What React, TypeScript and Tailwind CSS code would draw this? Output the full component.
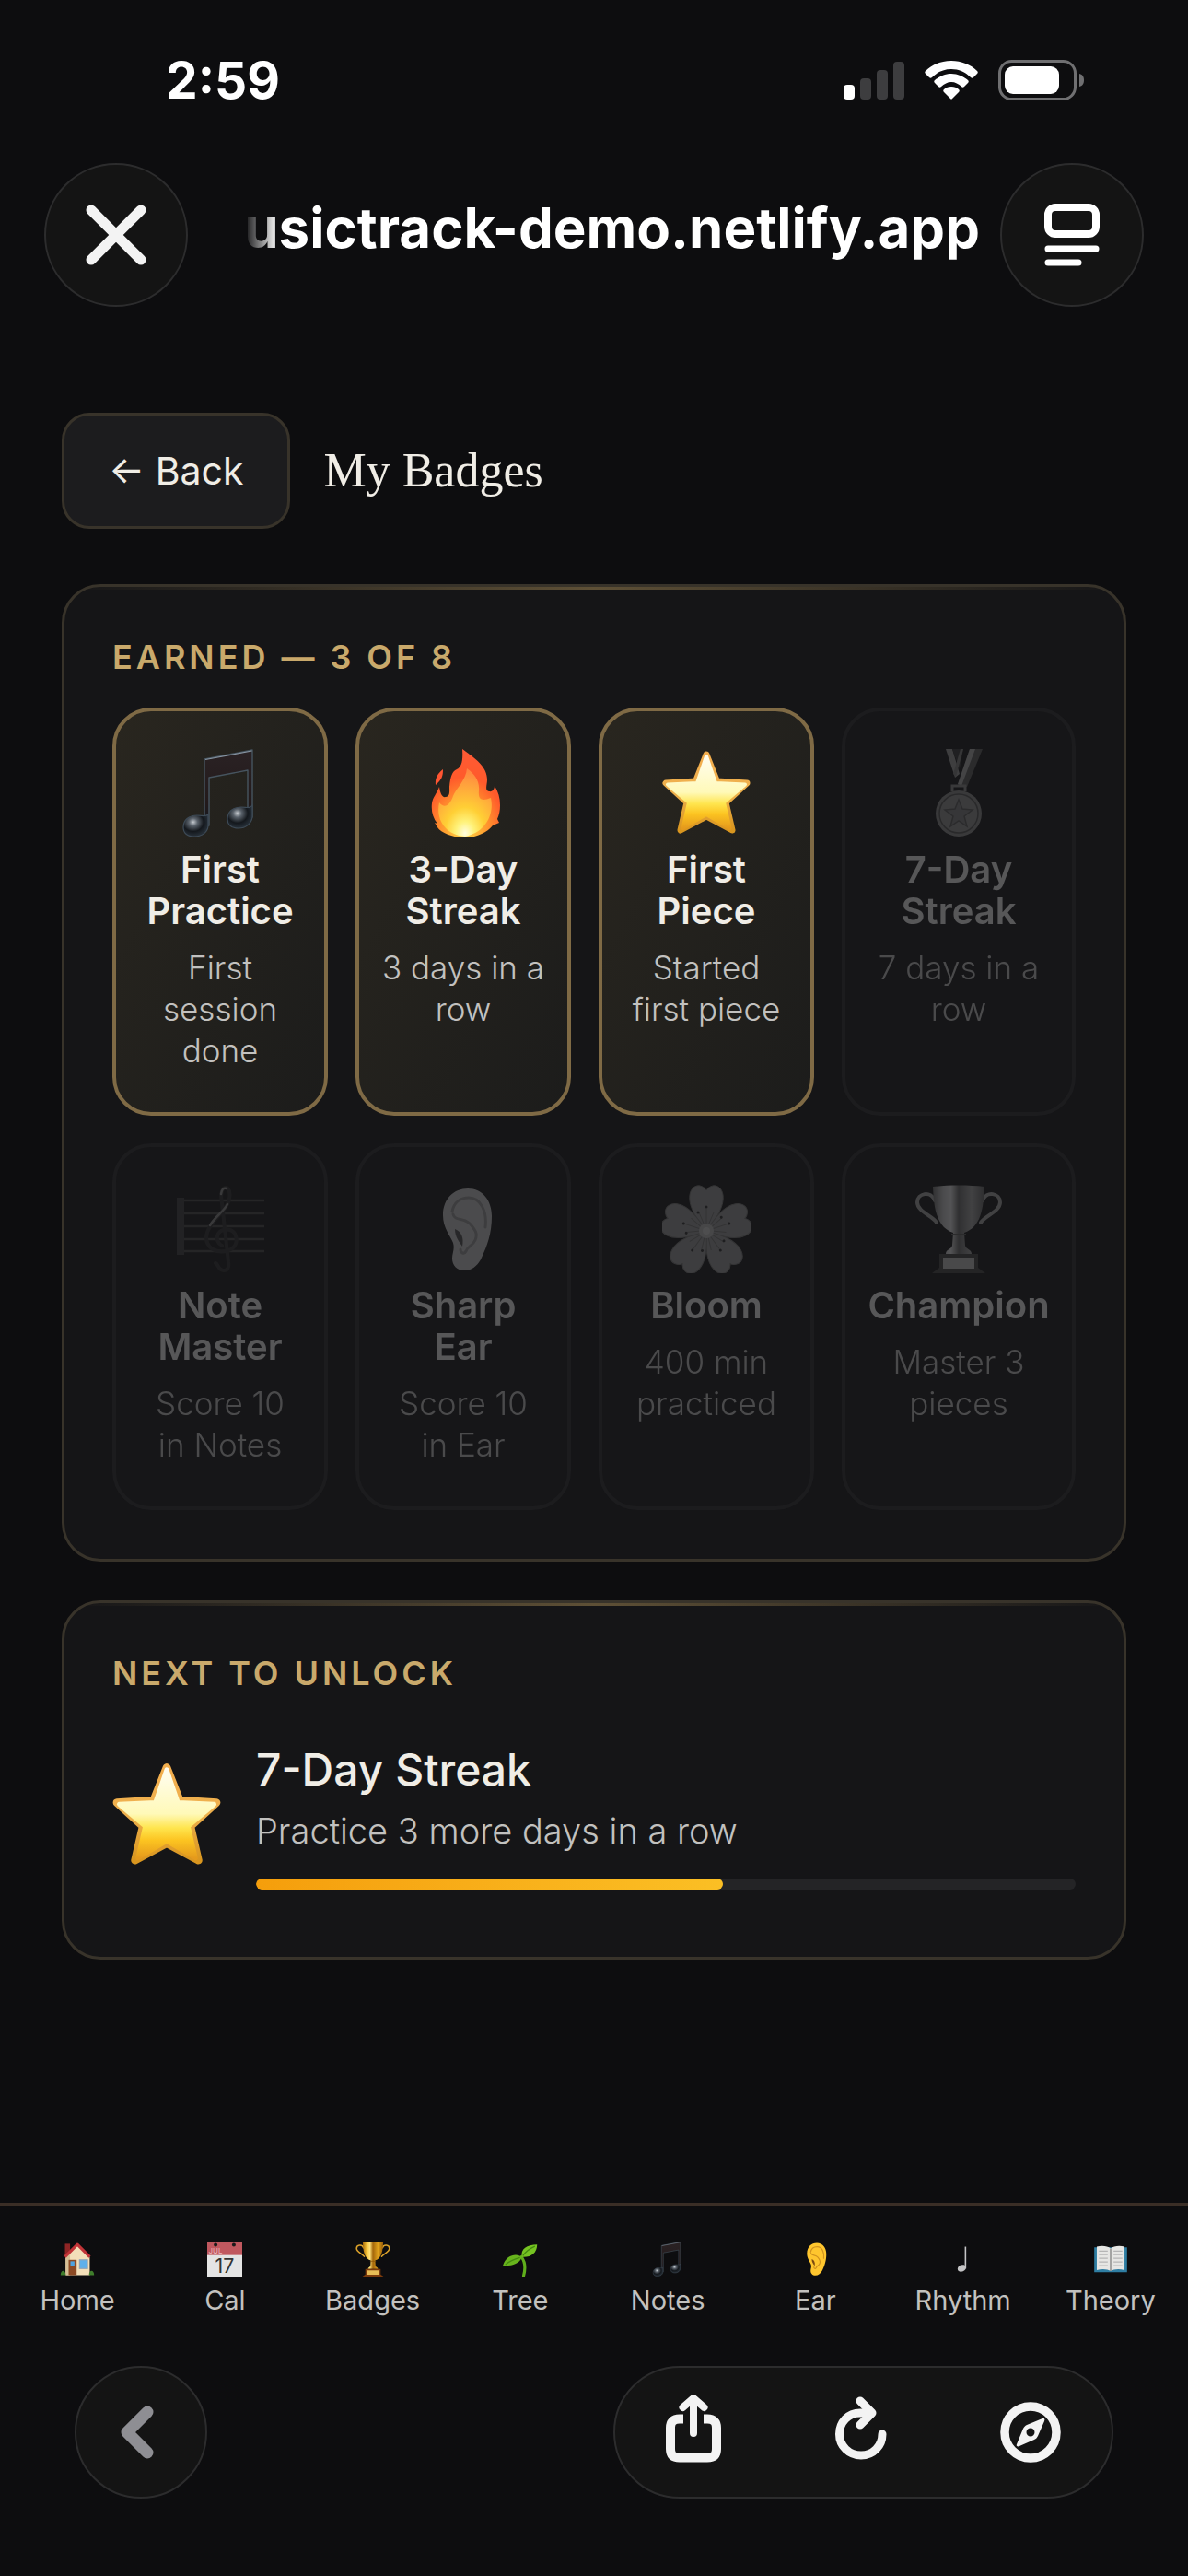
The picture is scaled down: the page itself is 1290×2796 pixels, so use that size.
import type { ReactNode } from "react";

interface IconProps {
  className?: string;
}

interface Badge {
  name: string;
  detail: string;
  icon: (props: IconProps) => ReactNode;
  earned: boolean;
}

/* ---------- Emoji style icons ---------- */

function NotesIcon({ className }: IconProps) {
  return (
    <svg viewBox="0 0 96 96" className={className} aria-hidden="true">
      <defs>
        <radialGradient id="noteHead" cx="0.4" cy="0.35" r="0.7">
          <stop offset="0" stopColor="#c4c9ce" />
          <stop offset="0.25" stopColor="#59616a" />
          <stop offset="0.6" stopColor="#14181d" />
          <stop offset="1" stopColor="#2c3640" />
        </radialGradient>
        <linearGradient id="noteBeam" x1="0" y1="0" x2="0" y2="1">
          <stop offset="0" stopColor="#2a2224" />
          <stop offset="0.7" stopColor="#231a1b" />
          <stop offset="1" stopColor="#141a22" />
        </linearGradient>
      </defs>
      <path
        d="M31 11 L83 1 V74 H78 V23 L36 31 V83 H31 Z"
        fill="url(#noteBeam)"
        stroke="#46545f"
        strokeWidth="1.4"
        strokeLinejoin="round"
      />
      <path d="M32 11.5 L82.5 2" stroke="#8794a1" strokeWidth="1.2" />
      <path
        d="M35 71 V84 C34 91 28 95 20 95 C12 95 8 91 8 85 C8 77 14 72 23 72 C29 72 32 74 35 71 Z"
        fill="url(#noteHead)"
        stroke="#3d4a56"
        strokeWidth="1.2"
      />
      <path
        d="M83 61 V74 C82 81 76 86 68 86 C60 86 56 82 56 76 C56 68 62 63 71 63 C77 63 80 65 83 61 Z"
        fill="url(#noteHead)"
        stroke="#3d4a56"
        strokeWidth="1.2"
      />
    </svg>
  );
}

function FlameIcon({ className }: IconProps) {
  return (
    <svg viewBox="0 0 96 96" className={className} aria-hidden="true">
      <defs>
        <radialGradient id="flameOuter" cx="0.48" cy="0.9" r="0.9">
          <stop offset="0" stopColor="#ffe04a" />
          <stop offset="0.35" stopColor="#ff9a2e" />
          <stop offset="0.65" stopColor="#ff5a2b" />
          <stop offset="1" stopColor="#ff5a36" />
        </radialGradient>
        <radialGradient id="flameInner" cx="0.5" cy="0.95" r="0.95">
          <stop offset="0" stopColor="#fffde0" />
          <stop offset="0.18" stopColor="#fff27a" />
          <stop offset="0.4" stopColor="#ffcf35" />
          <stop offset="0.75" stopColor="#ffa23d" />
          <stop offset="1" stopColor="#ff8140" />
        </radialGradient>
      </defs>
      <path
        d="M47 0 C56 7 74 17 74 33 C74 39 71 45 76 46 C80 47 82 43 82 40 C86 46 88 53 88 61 C88 67 87 71 85 76 L87 80 L80 83 C73 92 61 96 49 96 C36 96 24 91 20 85 L17 80 L20 81 C15 75 13 67 14 59 C15 52 19 49 22 41 C23 48 25 53 29 52 C34 51 33 46 33 41 C34 30 36 24 41 22 C46 20 48 13 47 0 Z"
        fill="url(#flameOuter)"
      />
      <path
        d="M52 21 C60 27 66 34 65 45 C64 55 68 57 78 53 C82 71 72 91 50 95 C28 93 18 76 22 58 C28 66 34 60 37 51 C40 43 51 34 52 21 Z"
        fill="url(#flameInner)"
      />
      <path d="M26 22 C26 29 25 33 18 39 C17 31 21 26 26 22 Z" fill="#ff5532" />
    </svg>
  );
}

function StarIcon({ className }: IconProps) {
  return (
    <svg viewBox="0 0 96 96" className={className} aria-hidden="true">
      <defs>
        <linearGradient id="starFill" x1="0" y1="0" x2="0" y2="1">
          <stop offset="0" stopColor="#fffdf0" />
          <stop offset="0.5" stopColor="#fff9b8" />
          <stop offset="0.66" stopColor="#ffe54e" />
          <stop offset="0.8" stopColor="#fcc421" />
          <stop offset="1" stopColor="#e59a1c" />
        </linearGradient>
        <linearGradient id="starEdge" x1="0" y1="0" x2="0" y2="1">
          <stop offset="0" stopColor="#f3ae4e" />
          <stop offset="0.5" stopColor="#eeb04d" />
          <stop offset="1" stopColor="#d9961f" />
        </linearGradient>
      </defs>
      <path
        d="M48 6 L59.5 35 L92 37 L69 58 L76 88 L48 73 L20 88 L27 58 L4 37 L36.5 35 Z"
        fill="url(#starEdge)"
        stroke="url(#starEdge)"
        strokeWidth="7"
        strokeLinejoin="round"
      />
      <path
        d="M48 8 L58 37 L90 38.5 L67 58 L73.5 86 L48 71 L22.5 86 L29 58 L6 38.5 L38 37 Z"
        fill="url(#starFill)"
        stroke="url(#starFill)"
        strokeWidth="4"
        strokeLinejoin="round"
      />
    </svg>
  );
}

function MedalIcon({ className }: IconProps) {
  return (
    <svg viewBox="0 0 96 96" className={className} aria-hidden="true">
      <path d="M34 0 H41 L49 27 L44 31 Z" fill="#9a9a9a" />
      <path d="M41 0 H53 L49 22 Z" fill="#3a3a3a" />
      <path d="M50 0 H53 L45 30 L42 27 Z" fill="#808080" />
      <path d="M60 0 H74 L57 41 L47 39 Z" fill="#5b5b5b" />
      <path d="M60 0 H66 L51 40 L47 38 Z" fill="#adadad" />
      <path d="M41 46 V40 H55 V46" fill="none" stroke="#8a8a8a" strokeWidth="3" />
      <circle cx="48" cy="70" r="25" fill="#8a8a8a" />
      <circle cx="48" cy="70" r="21" fill="#909090" stroke="#555" strokeWidth="1.5" />
      <path
        d="M48 55 L52 65 L63 66 L54 73 L57 84 L48 78 L39 84 L42 73 L33 66 L44 65 Z"
        fill="#828282"
        stroke="#5c5c5c"
        strokeWidth="1.5"
      />
    </svg>
  );
}

function ClefIcon({ className }: IconProps) {
  return (
    <svg viewBox="0 0 96 96" className={className} aria-hidden="true">
      <rect x="1" y="14" width="8" height="62" fill="#404040" />
      <path
        d="M9 17 H96 M9 31 H96 M9 45 H96 M9 59 H96 M9 72 H96"
        stroke="#484848"
        strokeWidth="2.5"
      />
      <path
        d="M43 85 C46 86 46 93 52 93 C56 93 58 90 57 84 L50 20 C48 10 50 3 54 3 C59 3 60 14 56 21 C50 33 34 42 33 57 C33 69 44 74 54 72 C65 70 68 61 64 53 C60 47 50 47 46 53 C43 59 46 64 50 66"
        fill="none"
        stroke="#303030"
        strokeWidth="4"
        strokeLinecap="round"
      />
      <path
        d="M56 21 C52 29 43 34 37 44 M49 10 C50 4 52 3 55 4"
        fill="none"
        stroke="#8a8a8a"
        strokeWidth="2.5"
        strokeLinecap="round"
      />
    </svg>
  );
}

function EarIcon({ className }: IconProps) {
  return (
    <svg viewBox="-4 0 96 96" className={className} aria-hidden="true">
      <path
        d="M49 4 C65 4 75 17 75 34 C75 53 70 66 64 79 C60 88 53 93 45 93 C37 93 32 87 32 80 C32 74 35 70 33 63 C30 55 22 47 22 33 C22 15 34 4 49 4 Z"
        fill="#ffc62e"
      />
      <path
        d="M32 29 C34 18 42 14 50 14 C63 14 70 29 68 46 M33 32 C35 40 45 35 52 43 C57 49 60 53 57 60 C54 67 49 66 47 72 C45 76 41 74 41 70"
        fill="none"
        stroke="#d0931f"
        strokeWidth="3"
        strokeLinecap="round"
      />
      <path d="M35 48 C42 51 45 57 43 67 C40 62 35 57 35 48 Z" fill="#7b4a10" />
    </svg>
  );
}

const PETALS = [0, 72, 144, 216, 288];

function FlowerIcon({ className }: IconProps) {
  return (
    <svg viewBox="0 0 96 96" className={className} aria-hidden="true">
      {PETALS.map((angle) => (
        <g key={angle} transform={`rotate(${angle} 48 50)`}>
          <path
            d="M48 50 C40 40 28 25 30 11 C31 4 36 0 41 1 C45 2 47 4 48 6 C49 4 51 2 55 1 C60 0 65 4 66 11 C68 25 56 40 48 50 Z"
            fill="#999"
            stroke="#7a7a7a"
            strokeWidth="1"
          />
          <path d="M48 46 V26 M46 44 L40 30 M50 44 L56 30" stroke="#777" strokeWidth="1" />
          <circle cx="48" cy="24" r="1.5" fill="#333" />
          <circle cx="39" cy="30" r="1.5" fill="#333" />
        </g>
      ))}
      <circle cx="48" cy="50" r="8" fill="#b8b8b8" />
      <circle cx="48" cy="50" r="4" fill="#cfcfcf" />
    </svg>
  );
}

function TrophyIcon({ className }: IconProps) {
  return (
    <svg viewBox="0 0 96 96" className={className} aria-hidden="true">
      <defs>
        <linearGradient id="trophyCup" x1="0" y1="0" x2="1" y2="0">
          <stop offset="0" stopColor="#a86a08" />
          <stop offset="0.2" stopColor="#f7c53a" />
          <stop offset="0.35" stopColor="#ffe27a" />
          <stop offset="0.5" stopColor="#a4660a" />
          <stop offset="0.75" stopColor="#e0a21c" />
          <stop offset="1" stopColor="#9a5d06" />
        </linearGradient>
      </defs>
      <path
        d="M22 17 C18 6 3 9 3 19 C3 29 20 34 24 41 M74 17 C78 6 93 9 93 19 C93 29 76 34 72 41"
        fill="none"
        stroke="#d9a02a"
        strokeWidth="4"
        strokeLinecap="round"
      />
      <path
        d="M20 2 C36 0 60 0 76 2 C75 26 72 46 54 52 L55 66 C56 70 62 70 62 75 H34 C34 70 40 70 41 66 L42 52 C24 46 21 26 20 2 Z"
        fill="url(#trophyCup)"
      />
      <path d="M40 54 H56" stroke="#8a560a" strokeWidth="2" />
      <path d="M27 75 H69 V90 L77 96 H19 L27 90 Z" fill="#7a3a0c" />
      <rect x="31" y="79" width="34" height="12" fill="#e8bd56" />
    </svg>
  );
}

function HomeIcon({ className }: IconProps) {
  return (
    <svg viewBox="0 0 96 96" className={className} aria-hidden="true">
      <rect x="14" y="6" width="14" height="34" fill="#8e2525" />
      <path d="M48 8 L82 42 V92 H16 V42 Z" fill="#f3dfb9" />
      <path d="M16 44 L28 30 V92 H16 Z" fill="#d6bf95" />
      <path
        d="M14 42 L48 8 L82 42"
        fill="none"
        stroke="#c23438"
        strokeWidth="8"
        strokeLinejoin="round"
      />
      <rect x="24" y="50" width="22" height="42" fill="#8c4a24" />
      <rect x="29" y="54" width="11" height="14" fill="#4fa3e0" />
      <rect x="54" y="50" width="22" height="24" fill="#5fb0ea" stroke="#93a5b5" strokeWidth="3" />
      <path d="M2 92 C2 76 16 76 16 92 Z M80 92 C80 76 94 76 94 92 Z" fill="#3f7d2c" />
    </svg>
  );
}

function CalendarIcon({ className }: IconProps) {
  return (
    <svg viewBox="0 0 96 96" className={className} aria-hidden="true">
      <rect width="96" height="96" fill="#e4e4e4" />
      <rect width="96" height="37" fill="#c0585f" />
      <circle cx="23" cy="9" r="5" fill="#1a1a1a" />
      <circle cx="73" cy="9" r="5" fill="#1a1a1a" />
      <text x="4" y="33" fill="#edb9bc" fontSize="20" fontFamily="Inter, sans-serif">
        JUL
      </text>
      <text
        x="48"
        y="86"
        textAnchor="middle"
        fill="#333"
        fontSize="54"
        fontFamily="Inter, sans-serif"
      >
        17
      </text>
    </svg>
  );
}

function SproutIcon({ className }: IconProps) {
  return (
    <svg viewBox="0 0 96 96" className={className} aria-hidden="true">
      <path
        d="M57 94 C63 72 61 55 51 42"
        fill="none"
        stroke="#5fae1c"
        strokeWidth="8"
        strokeLinecap="round"
      />
      <path d="M52 42 C48 20 66 8 94 8 C94 32 76 44 52 42 Z" fill="#76c322" />
      <path d="M52 43 C40 30 8 36 0 66 C22 68 46 62 52 43 Z" fill="#68b41d" />
      <path
        d="M55 39 C64 26 76 18 88 13 M47 44 C32 48 18 54 7 63"
        fill="none"
        stroke="#438a10"
        strokeWidth="3"
      />
    </svg>
  );
}

function QuarterNoteIcon({ className }: IconProps) {
  return (
    <svg viewBox="0 0 96 96" className={className} aria-hidden="true">
      <path d="M54 14 V74" stroke="#c4c4c6" strokeWidth="4" />
      <ellipse cx="44" cy="73" rx="12" ry="9" fill="#c4c4c6" transform="rotate(-22 44 73)" />
    </svg>
  );
}

function BookIcon({ className }: IconProps) {
  return (
    <svg viewBox="0 0 96 96" className={className} aria-hidden="true">
      <path d="M3 16 H93 V84 H3 Z" fill="#2f7ea3" />
      <path
        d="M10 14 C24 10 40 12 48 19 C56 12 72 10 86 14 V78 C72 74 56 75 48 81 C40 75 24 74 10 78 Z"
        fill="#e6e6e4"
      />
      <path
        d="M16 26 H40 M16 36 H40 M16 46 H40 M16 56 H40 M16 66 H40 M56 26 H80 M56 36 H80 M56 46 H80 M56 56 H80 M56 66 H80"
        stroke="#b5b5b5"
        strokeWidth="3"
      />
      <path d="M48 19 V81" stroke="#777" strokeWidth="3" />
    </svg>
  );
}

/* ---------- Data ---------- */

// \u00a0 keeps the last two words of a line together
const BADGES: Badge[] = [
  { name: "First Practice", detail: "First session done", icon: NotesIcon, earned: true },
  { name: "3-Day Streak", detail: "3 days in a row", icon: FlameIcon, earned: true },
  { name: "First Piece", detail: "Started first\u00a0piece", icon: StarIcon, earned: true },
  { name: "7-Day Streak", detail: "7 days in a row", icon: MedalIcon, earned: false },
  { name: "Note Master", detail: "Score 10 in\u00a0Notes", icon: ClefIcon, earned: false },
  { name: "Sharp Ear", detail: "Score 10 in\u00a0Ear", icon: EarIcon, earned: false },
  { name: "Bloom", detail: "400 min practiced", icon: FlowerIcon, earned: false },
  { name: "Champion", detail: "Master 3 pieces", icon: TrophyIcon, earned: false },
];

const TABS = [
  { label: "Home", icon: HomeIcon },
  { label: "Cal", icon: CalendarIcon },
  { label: "Badges", icon: TrophyIcon },
  { label: "Tree", icon: SproutIcon },
  { label: "Notes", icon: NotesIcon },
  { label: "Ear", icon: EarIcon },
  { label: "Rhythm", icon: QuarterNoteIcon },
  { label: "Theory", icon: BookIcon },
];

/* ---------- Sections ---------- */

function StatusBar() {
  return (
    <div className="flex items-center justify-between pt-[54px] pl-[180px] pr-[112px]">
      <span className="text-[55px] leading-[66px] font-bold text-white">2:59</span>
      <div className="flex items-center gap-[22px]">
        <svg width="66" height="42" viewBox="0 0 66 42" aria-label="Signal">
          <rect x="0" y="26" width="12" height="16" rx="4" fill="#fff" />
          <rect x="18" y="19" width="12" height="23" rx="4" fill="#3d3d3f" />
          <rect x="36" y="10" width="12" height="32" rx="4" fill="#3d3d3f" />
          <rect x="54" y="1" width="12" height="41" rx="4" fill="#3d3d3f" />
        </svg>
        <svg width="58" height="42" viewBox="0 0 58 42" aria-label="Wi-Fi" fill="#fff">
          <path d="M29 0 C40 0 50 4 57 11 C58 12 58 13 57 14 L53 18 C52 19 51 19 50 18 C44 12 37 9 29 9 C21 9 14 12 8 18 C7 19 6 19 5 18 L1 14 C0 13 0 12 1 11 C8 4 18 0 29 0 Z" />
          <path d="M29 14 C36 14 42 17 47 21 C48 22 48 23 47 24 L43 28 C42 29 41 29 40 28 C37 25 33 23 29 23 C25 23 21 25 18 28 C17 29 16 29 15 28 L11 24 C10 23 10 22 11 21 C16 17 22 14 29 14 Z" />
          <path d="M29 28 C32 28 35 29 37 31 C38 32 38 33 37 34 L30 41 C29 42 29 42 28 41 L21 34 C20 33 20 32 21 31 C23 29 26 28 29 28 Z" />
        </svg>
        <svg width="94" height="44" viewBox="0 0 94 44" aria-label="Battery">
          <rect
            x="1.5"
            y="1.5"
            width="82"
            height="41"
            rx="13"
            fill="none"
            stroke="#6f6f71"
            strokeWidth="3"
          />
          <rect x="7" y="7" width="59" height="30" rx="9" fill="#fff" />
          <path d="M88 15 C92 16 93 19 93 22 C93 25 92 28 88 29 Z" fill="#6f6f71" />
        </svg>
      </div>
    </div>
  );
}

function BrowserHeader() {
  return (
    <header className="flex items-center justify-between gap-[22px] px-12 pt-[57px]">
      <button
        type="button"
        aria-label="Close"
        className="flex size-[156px] shrink-0 items-center justify-center rounded-full border-2 border-[#2c2c2d] bg-[#141414]"
      >
        <svg width="66" height="66" viewBox="0 0 66 66">
          <path
            d="M6 6 L60 60 M60 6 L6 60"
            stroke="#f3f3f3"
            strokeWidth="11"
            strokeLinecap="round"
          />
        </svg>
      </button>
      <div className="flex min-w-0 flex-1 justify-end overflow-hidden pb-4">
        <span className="bg-gradient-to-r from-transparent to-white to-[36px] bg-clip-text text-[60px] leading-[72px] font-bold whitespace-nowrap text-transparent">
          usictrack-demo.netlify.app
        </span>
      </div>
      <button
        type="button"
        aria-label="Page menu"
        className="flex size-[156px] shrink-0 items-center justify-center rounded-full border-2 border-[#2c2c2d] bg-[#141414]"
      >
        <svg width="60" height="68" viewBox="0 0 60 68">
          <rect
            x="4"
            y="4"
            width="52"
            height="29"
            rx="8"
            fill="none"
            stroke="#fff"
            strokeWidth="8"
          />
          <path d="M4 49 H56 M4 64 H37" stroke="#fff" strokeWidth="7" strokeLinecap="round" />
        </svg>
      </button>
    </header>
  );
}

function Card({ title, children }: { title: string; children: ReactNode }) {
  return (
    <section className="relative overflow-hidden rounded-[42px] border-[3px] border-[#38332a] bg-[#151517] px-[52px] pb-[53px] pt-[53px]">
      {/* gold highlight on the upper edge */}
      <div className="absolute inset-x-0 top-0 h-[3px] bg-gradient-to-r from-transparent via-[#5e5036] to-transparent" />
      <h2 className="text-[36px] leading-[46px] font-semibold tracking-[0.11em] text-[#c9a96b] uppercase">
        {title}
      </h2>
      {children}
    </section>
  );
}

function BadgeTile({ badge }: { badge: Badge }) {
  const Icon = badge.icon;
  return (
    <li
      className={`rounded-[42px] border-4 px-[22px] pt-[41px] pb-[44px] text-center ${
        badge.earned
          ? "border-[#7f6a45] bg-gradient-to-br from-[#29261f] to-[#1c1c1b]"
          : "border-[#1c1c1e] bg-[#161618]"
      }`}
    >
      <div className={badge.earned ? "" : "opacity-30 grayscale"}>
        <Icon className="mx-auto mb-3 size-24" />
        <h3 className="text-[40px] leading-[45px] font-semibold text-[#f0ede6]">{badge.name}</h3>
        <p className="mt-[17px] text-[35px] leading-[45px] font-light text-[#c2c1bf]">
          {badge.detail}
        </p>
      </div>
    </li>
  );
}

function NextToUnlock({ done, total }: { done: number; total: number }) {
  return (
    <div className="mt-[30px] flex items-center gap-[38px] py-5">
      <StarIcon className="size-[118px] shrink-0" />
      <div className="flex-1">
        <h3 className="text-[48px] leading-[64px] font-medium text-[#f0ede6]">7-Day Streak</h3>
        <p className="mt-1 text-[38px] leading-[60px] font-light text-[#c2c1bf]">
          Practice {total - done} more days in a row
        </p>
        <div className="mt-[22px] h-3 overflow-hidden rounded-full bg-[#242426]">
          <div
            className="h-full rounded-full bg-gradient-to-r from-[#f59e0b] to-[#fbbf24]"
            style={{ width: `${Math.round((done / total) * 100)}%` }}
          />
        </div>
      </div>
    </div>
  );
}

function TabBar() {
  return (
    <nav className="grid grid-cols-8 border-t-[3px] border-[#3a2e26] px-1 pt-[39px]">
      {TABS.map(({ label, icon: Icon }) => (
        <a key={label} href={`#${label.toLowerCase()}`} className="flex flex-col items-center">
          <Icon className="size-[38px]" />
          <span className="mt-[7px] text-[29px] leading-[38px] text-[#c2c1bf]">{label}</span>
        </a>
      ))}
    </nav>
  );
}

function BrowserToolbar() {
  return (
    <div className="flex justify-between px-[81px] pt-[52px] pb-[84px]">
      <button
        type="button"
        aria-label="Go back"
        className="flex size-36 items-center justify-center rounded-full border-2 border-[#2c2c2d] bg-[#141414]"
      >
        <svg width="46" height="58" viewBox="0 0 46 58">
          <path
            d="M30 7 L8 29 L30 51"
            fill="none"
            stroke="#8e8e93"
            strokeWidth="13"
            strokeLinecap="round"
            strokeLinejoin="round"
          />
        </svg>
      </button>
      <div className="flex h-36 w-[543px] items-center justify-between rounded-full border-2 border-[#2c2c2d] bg-[#141414] px-[55px]">
        <button type="button" aria-label="Share" className="pb-2">
          <svg width="60" height="74" viewBox="0 0 60 74" fill="none" stroke="#f3f3f3">
            <path
              d="M19 26.500 H15 C8 26.500 5 30 5 36 V59 C5 66 8 68.500 15 68.500 H45 C52 68.500 55 66 55 59 V36 C55 30 52 26.500 45 26.500 H41"
              strokeWidth="10"
            />
            <path
              d="M30 42 V6 M18.5 14 L30 4 L41.5 14"
              strokeWidth="8"
              strokeLinecap="round"
              strokeLinejoin="round"
            />
          </svg>
        </button>
        <button type="button" aria-label="Reload" className="pb-2">
          <svg width="58" height="70" viewBox="0 0 58 70" fill="none" stroke="#f3f3f3">
            <path
              d="M52 41 C52 54 42 64 29 64 C16 64 5.5 54 5.5 41 C5.5 28 15 18 28 18 H40"
              strokeWidth="9"
              strokeLinecap="round"
            />
            <path
              d="M28 5 L41 18 L28 31"
              strokeWidth="9"
              strokeLinecap="round"
              strokeLinejoin="round"
            />
          </svg>
        </button>
        <button type="button" aria-label="Open in browser">
          <svg width="66" height="66" viewBox="0 0 66 66">
            <circle cx="33" cy="33" r="28" fill="none" stroke="#f3f3f3" strokeWidth="9.5" />
            <path
              fillRule="evenodd"
              d="M46 18 C48 17 49 19 48 21 L41 37 C40 39 39 40 37 41 L21 48 C19 49 17 48 18 46 L25 29 C26 27 27 26 29 25 Z M33 28.5 A4.5 4.5 0 1 0 33 37.5 A4.5 4.5 0 1 0 33 28.5 Z"
              fill="#f3f3f3"
            />
          </svg>
        </button>
      </div>
    </div>
  );
}

export default function App() {
  const earnedCount = BADGES.filter((badge) => badge.earned).length;

  return (
    <div className="flex min-h-screen flex-col bg-[#0d0d0f] font-['Inter','Noto_Sans',sans-serif]">
      <StatusBar />
      <BrowserHeader />

      <main className="flex-1 px-[67px] pt-[115px]">
        <div className="mb-[60px] flex items-center gap-[36px]">
          <button
            type="button"
            className="rounded-[30px] border-[3px] border-[#38332a] bg-[#1c1c1e] px-12 py-[30px] text-[41px] leading-[60px] text-[#f0ede6]"
          >
            ← Back
          </button>
          <h1 className="font-['Liberation_Serif',serif] text-[52px] leading-[60px] text-[#f0ede6]">
            My Badges
          </h1>
        </div>

        <div className="flex flex-col gap-[42px]">
          <Card title={`Earned — ${earnedCount} of ${BADGES.length}`}>
            <ul className="mt-8 grid grid-cols-[1fr_1fr_1fr_254px] gap-[30px]">
              {BADGES.map((badge) => (
                <BadgeTile key={badge.name} badge={badge} />
              ))}
            </ul>
          </Card>

          <Card title="Next to unlock">
            <NextToUnlock done={4} total={7} />
          </Card>
        </div>
      </main>

      <TabBar />
      <BrowserToolbar />
    </div>
  );
}
